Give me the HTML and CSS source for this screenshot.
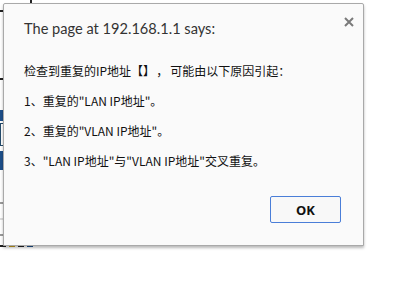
FILE: index.html
```html
<!DOCTYPE html>
<html>
<head>
<meta charset="utf-8">
<link rel="stylesheet" href="styles.css">
</head>
<body>
<div class="page">
  <div class="bracket b1"></div>
  <div class="bracket b2"></div>
  <div class="navy tab">A</div>
  <div class="box"></div>
  <div class="navy bar"></div>
  <div class="purple">L</div>
  <div class="rule r1"></div>
  <div class="rule r2"></div>
  <div class="rule r3"></div>
  <div class="dots"><span class="d1"></span><span class="d2"></span><span class="d3"></span><span class="d4"></span></div>
</div>
<div class="dialog">
  <div class="head">
    <div class="title">The page at 192.168.1.1 says:</div>
    <svg class="close" width="10" height="10" viewBox="0 0 10 10"><path d="M1 1L9 9M9 1L1 9" stroke="#7a7a7a" stroke-width="2"/></svg>
  </div>
  <div class="msg">
    <p>检查到重复的IP地址【】<span class="wide">，</span>可能由以下原因引起：</p>
    <p>1、重复的"LAN IP地址"。</p>
    <p>2、重复的"VLAN IP地址"。</p>
    <p>3、"LAN IP地址"与"VLAN IP地址"交叉重复。</p>
  </div>
  <div class="actions"><button class="ok">OK</button></div>
</div>
</body>
</html>
```
FILE: styles.css
```css
html, body { margin: 0; padding: 0; background: #fff; }
body { width: 400px; height: 300px; overflow: hidden; position: relative; font-family: "Noto Sans", "Noto Sans CJK SC", sans-serif; }
.page { width: 34px; display: flex; flex-direction: column; }
.bracket { width: 30px; height: 10px; border-right: 2px solid #222; border-bottom: 2px solid #222; }
.b1 { margin-top: 0; }
.b2 { margin-top: 56px; }
.navy { background: #1d4f8a; color: #fff; font: bold 11px "Liberation Sans", sans-serif; text-align: right; }
.tab { margin-top: 30px; height: 11px; line-height: 11px; }
.box { margin-top: 2px; height: 21px; border: 1px solid #234a6a; background: #fff; }
.bar { margin-top: 5px; height: 19px; }
.purple { margin-top: 11px; height: 12px; font: 11px "Liberation Sans", sans-serif; color: #6a2a8a; text-align: right; }
.rule { height: 2px; background: #9a9a9a; }
.r1 { margin-top: 9px; }
.r2 { margin-top: 14px; background: #dcdcdc; }
.r3 { margin-top: 14px; }
.dots { margin-top: 9px; height: 2px; display: flex; gap: 3px; }
.dots span { width: 6px; height: 2px; background: #222; }
.dots .d2 { background: #c8a020; }
.dots .d4 { background: #1d4f8a; }

.dialog { position: absolute; left: 3px; top: 3px; width: 359px; height: 241px; background: #fafafa; border: 1px solid #a9a9a9; border-radius: 2px 2px 0 0; box-shadow: 0 2px 3px rgba(0,0,0,0.28); display: flex; flex-direction: column; }
.head { display: flex; justify-content: space-between; align-items: flex-start; padding: 15px 9px 0 20px; }
.title { font-family: Lato, "Noto Sans", sans-serif; font-size: 14.6px; line-height: 20px; color: #333; }
.close { margin-top: -2px; }
.msg { margin-top: 17px; padding-left: 20px; font-family: "Noto Sans CJK SC", sans-serif; font-size: 12px; line-height: 30px; color: #111; }
.msg p { margin: 0; }
.wide { padding: 0 2px 0 7px; }
.actions { margin-top: auto; display: flex; justify-content: flex-end; padding: 0 22px 22px 0; }
.ok { width: 71px; height: 27px; border: 1px solid #4a7ed8; border-radius: 2px; background: #f8f8f8; font: bold 13px "Noto Sans", sans-serif; color: #111; padding: 0; }
```
